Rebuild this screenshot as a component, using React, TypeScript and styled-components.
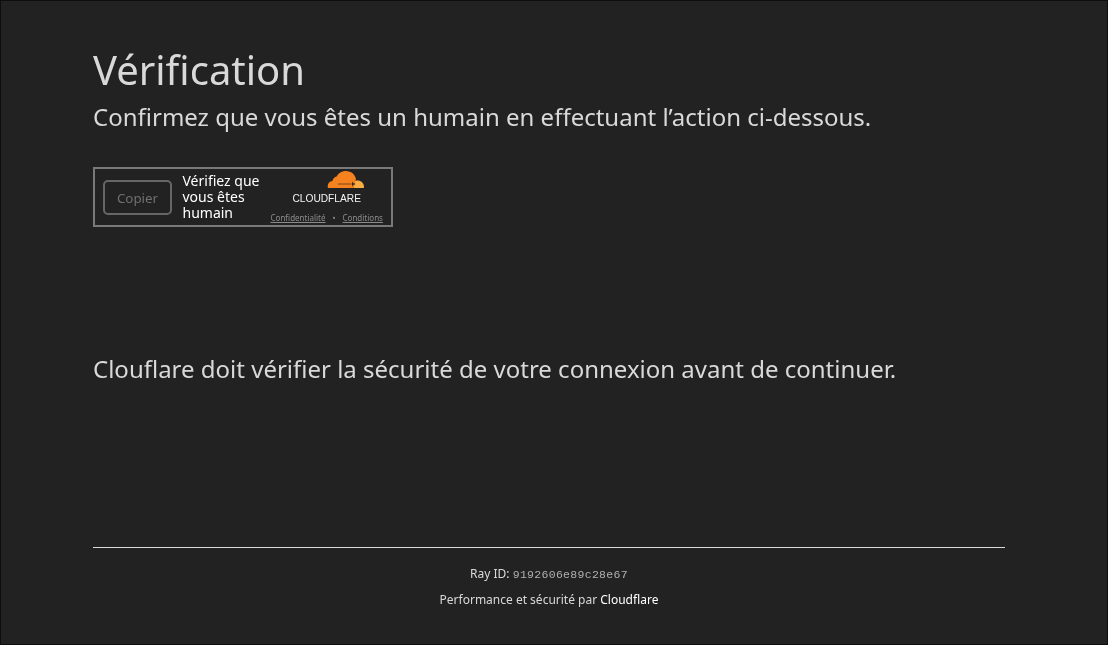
import React from 'react';
import styled, { createGlobalStyle } from 'styled-components';

const GlobalStyle = createGlobalStyle`
  html, body {
    margin: 0;
    padding: 0;
    background: #222222;
  }
  * {
    box-sizing: border-box;
  }
`;

// own layer with no opaque background, so text is antialiased in grey
const Page = styled.div`
  width: 1108px;
  height: 645px;
  border: 1px solid #0e0e0e;
  color: #d9d9d9;
  font-family: "Noto Sans", sans-serif;
  padding: 39px 102px 0 92px;
  display: flex;
  flex-direction: column;
  overflow: hidden;
  will-change: transform;
`;

const Title = styled.h1`
  margin: 0;
  font-size: 40px;
  font-weight: 400;
  line-height: 59px;
`;

const Subtitle = styled.h2`
  margin: 0;
  font-size: 24px;
  font-weight: 400;
  line-height: 36px;
`;

const Widget = styled.div`
  width: 300px;
  height: 60px;
  margin-top: 32px;
  border: 2px solid #797979;
  display: flex;
  align-items: center;
  padding-left: 8px;
  color: #ffffff;
`;

const CopyButton = styled.button`
  width: 69px;
  height: 35px;
  flex: none;
  padding: 1px 0 0;
  background: transparent;
  border: 2px solid #666666;
  border-radius: 5px;
  color: #707070;
  font-family: inherit;
  font-size: 13.33px;
  line-height: 31px;
`;

const WidgetLabel = styled.div`
  width: 88px;
  margin-left: 10.5px;
  font-size: 14px;
  line-height: 16px;
  flex: none;
`;

const Branding = styled.div`
  flex: 1;
  align-self: stretch;
  display: flex;
  flex-direction: column;
  align-items: center;
  padding-right: 10px;
`;

const CloudIcon = styled.svg`
  width: 37px;
  height: 17px;
  margin-top: 2px;
  margin-left: 38px;
`;

const Wordmark = styled.div`
  font-family: "Liberation Sans", Arial, sans-serif;
  font-size: 10.2px;
  line-height: 13px;
  margin-top: 4px;
  color: #f2f2f2;
`;

const LegalRow = styled.div`
  display: flex;
  align-items: center;
  gap: 7px;
  margin-top: 7px;
  font-size: 8px;
  line-height: 11px;
  color: #8c8c8c;
`;

const LegalLink = styled.a`
  color: inherit;
  text-decoration: underline;
`;

const Message = styled.p`
  margin: 124px 0 0;
  font-size: 24px;
  font-weight: 400;
  line-height: 36px;
`;

const Footer = styled.footer`
  margin-top: 160px;
  border-top: 1px solid #d9d9d9;
  padding-top: 17px;
  text-align: center;
  font-size: 12px;
  line-height: 18px;
`;

const RayLine = styled.div`
  height: 18px;
`;

const RayCode = styled.code`
  font-family: "Liberation Mono", monospace;
  font-size: 11.5px;
  letter-spacing: 0.3px;
  color: #b0b0b0;
`;

const PoweredLine = styled.div`
  margin-top: 8px;
`;

const PoweredLink = styled.a`
  color: #ffffff;
`;

const App: React.FC = () => {
  return (
    <>
      <GlobalStyle />
      <Page>
        <Title>Vérification</Title>
        <Subtitle>Confirmez que vous êtes un humain en effectuant l’action ci-dessous.</Subtitle>
        <Widget>
          <CopyButton>Copier</CopyButton>
          <WidgetLabel>Vérifiez que vous êtes humain</WidgetLabel>
          <Branding>
            <CloudIcon viewBox="0 0 37 17" aria-hidden="true">
              <path
                fill="#f6821f"
                d="M26.500 17H1C.8 16.400.7 15.800.7 15.200.7 12.400 2.700 10.200 5.400 10 6 7.400 7.600 6 9.600 5.600 11.200 2.300 14.700 0 18.800 0 24 0 28.200 3.600 29 8 28 11 27.200 14 26.500 17z"
              />
              <path
                fill="#fbad41"
                d="M30.400 9.600c-.8 0-1.500.1-2.200.3-.4 1.700-1 4.600-1.700 7.100h10.300c.2-.5.2-1 .2-1.500 0-3.200-3-5.900-6.600-5.900z"
              />
              <path fill="#222222" d="M10.800 12.700h13.700v.6H10.800z" />
              <path fill="#222222" d="M25.500 10.500l.8 1.800 2.400.7-2.400.7-.8 1.800-.5-2.500z" />
            </CloudIcon>
            <Wordmark>CLOUDFLARE</Wordmark>
            <LegalRow>
              <LegalLink>Confidentialité</LegalLink>
              <span>•</span>
              <LegalLink>Conditions</LegalLink>
            </LegalRow>
          </Branding>
        </Widget>
        <Message>Clouflare doit vérifier la sécurité de votre connexion avant de continuer.</Message>
        <Footer>
          <RayLine>
            Ray ID: <RayCode>9192606e89c28e67</RayCode>
          </RayLine>
          <PoweredLine>
            Performance et sécurité par <PoweredLink>Cloudflare</PoweredLink>
          </PoweredLine>
        </Footer>
      </Page>
    </>
  );
};

export default App;
